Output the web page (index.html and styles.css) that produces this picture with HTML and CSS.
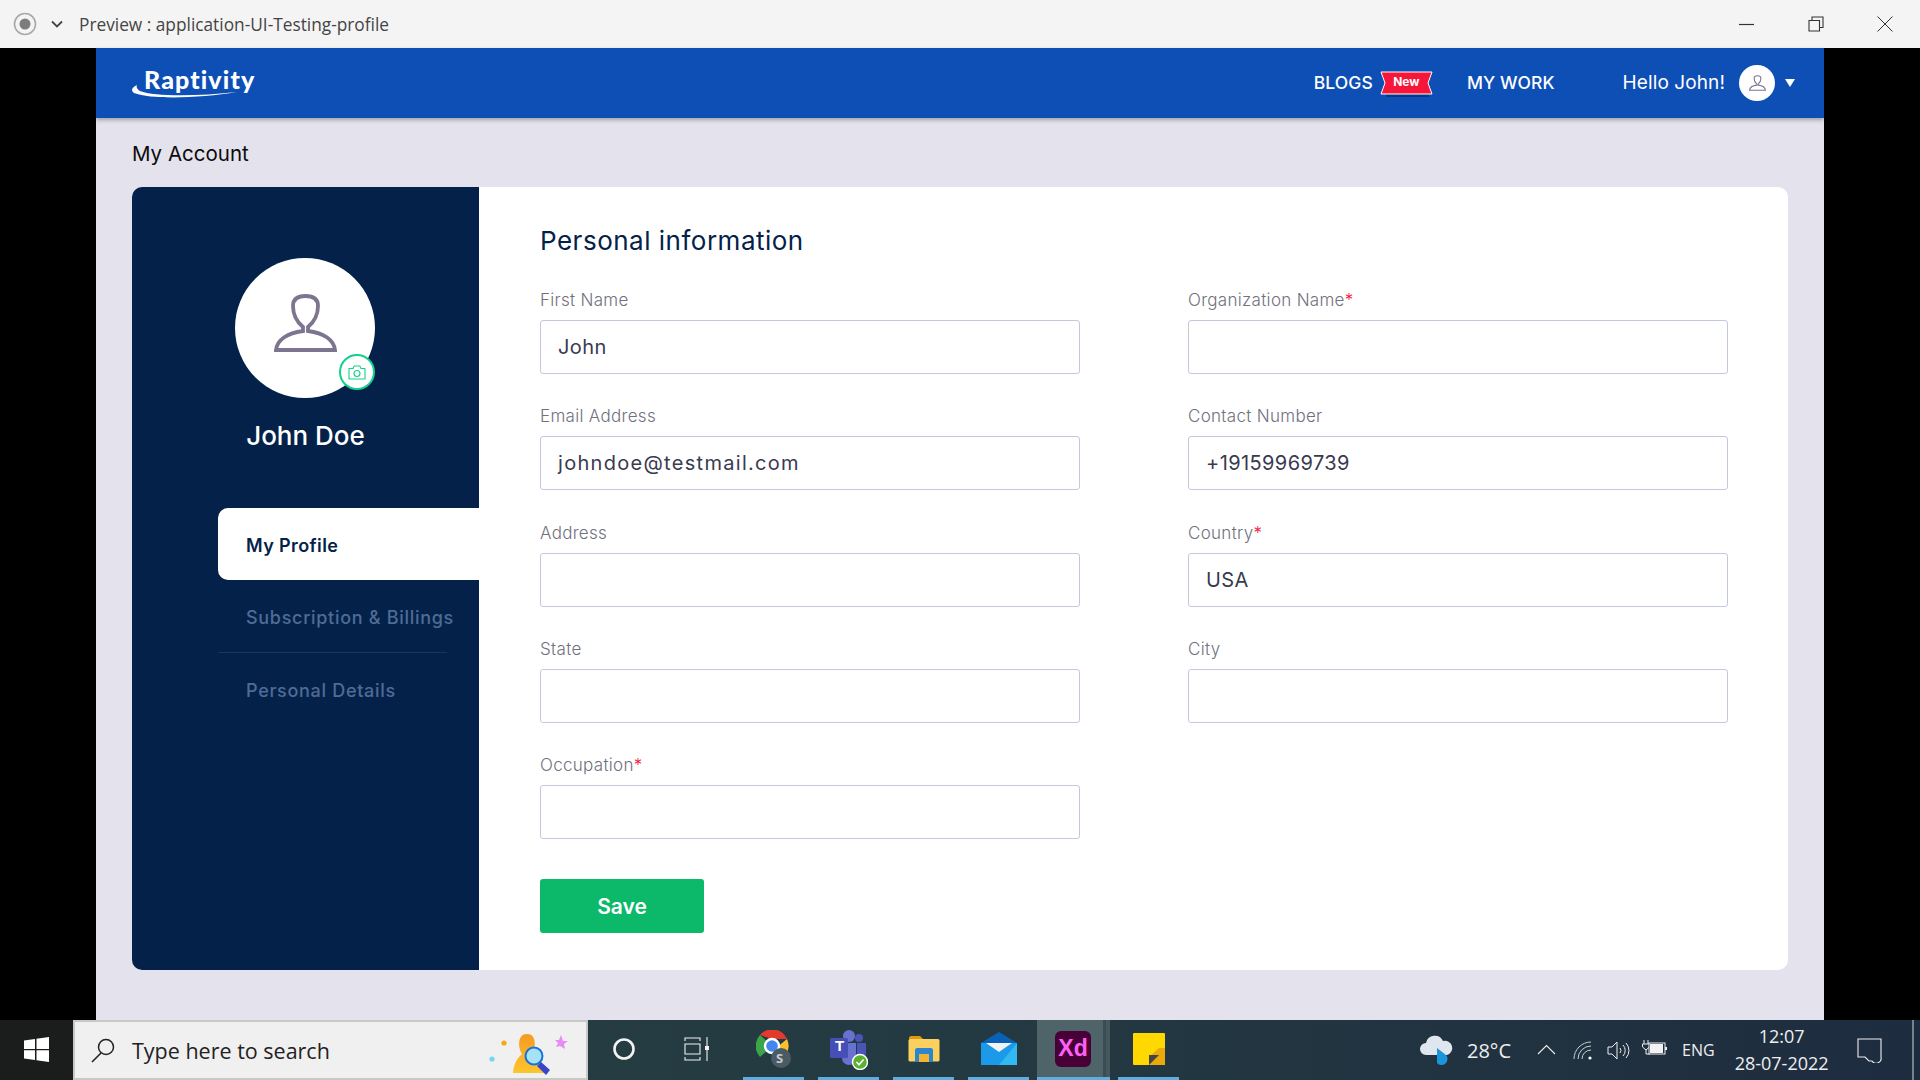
FILE: index.html
```html
<!DOCTYPE html>
<html lang="en">
<head>
  <meta charset="UTF-8" />
  <title>Preview : application-UI-Testing-profile</title>
  <link rel="stylesheet" href="styles.css">
</head>
<body>

  <div class="titlebar">
    <svg class="rec-icon" width="24" height="24" viewBox="0 0 24 24"><circle cx="12" cy="12" r="10.5" fill="none" stroke="#a9a9a9" stroke-width="1.6"/><circle cx="12" cy="12" r="5.5" fill="#7d7d7d"/></svg>
    <svg class="title-chevron" width="14" height="10" viewBox="0 0 14 10"><path d="M2 2.5 L7 7.5 L12 2.5" fill="none" stroke="#444" stroke-width="1.8"/></svg>
    <span class="title-text">Preview : application-UI-Testing-profile</span>
    <div class="window-btns">
      <svg width="16" height="16" viewBox="0 0 16 16"><path d="M0 8.5 H15" stroke="#333" stroke-width="1.2"/></svg>
      <svg width="16" height="16" viewBox="0 0 16 16"><path d="M1 4.5 H11.5 V15 H1 Z M4 4.5 V1 H15 V11.5 H11.5" fill="none" stroke="#333" stroke-width="1.1"/></svg>
      <svg width="16" height="16" viewBox="0 0 16 16"><path d="M0.5 0.5 L15.5 15.5 M15.5 0.5 L0.5 15.5" stroke="#333" stroke-width="1"/></svg>
    </div>
  </div>

  <div class="stage">
    <div class="app">
      <header class="header">
        <a class="logo">
          <svg class="logo-swoosh" width="112" height="14" viewBox="0 0 112 14"><path d="M6 0 C0 3 0 6 3 8 C22 15 70 13 106 7 C70 11 24 12 9 6 C6 4 5 2 6 0 Z" fill="#fff"/></svg>
          <span class="logo-text">Raptivity</span>
        </a>
        <nav class="nav">
          <a class="nav-link">BLOGS</a>
          <span class="ribbon">
            <svg width="53" height="26" viewBox="0 0 53 26"><path d="M6 23 H49 V26 H6 Z" fill="#0a2f74" opacity=".75"/><path d="M1 1 H52 L48 12 L52 23 H1 L5 12 Z" fill="#f5163a" stroke="#fff" stroke-width="1"/></svg>
            <span class="ribbon-text">New</span>
          </span>
          <a class="nav-link nav-work">MY WORK</a>
          <span class="hello">Hello John!</span>
          <span class="nav-avatar">
            <svg width="17" height="16" viewBox="0 0 63 58"><path d="M2 56 C3 46 13 39 29 37 V33 C23 28 19 22 19 12 C19 5 24 2 31.5 2 C39 2 44 5 44 12 C44 22 40 28 34 33 V37 C50 39 60 46 61 56 Z" fill="none" stroke="#7d7490" stroke-width="4"/></svg>
          </span>
          <span class="caret"></span>
        </nav>
      </header>

      <main class="page">
        <h1 class="page-title">My Account</h1>
        <div class="card">
          <aside class="side">
            <div class="avatar">
              <svg width="63" height="58" viewBox="0 0 63 58"><path d="M2 56 C3 46 13 39 29 37 V33 C23 28 19 22 19 12 C19 5 24 2 31.5 2 C39 2 44 5 44 12 C44 22 40 28 34 33 V37 C50 39 60 46 61 56 Z" fill="none" stroke="#7d7490" stroke-width="3.8"/></svg>
              <span class="avatar-cam">
                <svg width="18" height="15" viewBox="0 0 18 15"><path d="M1 3.5 H5 L6.2 1 H11.8 L13 3.5 H17 V14 H1 Z" fill="none" stroke="#14d18c" stroke-width="1.1" stroke-linejoin="round"/><circle cx="9" cy="8.5" r="3" fill="none" stroke="#14d18c" stroke-width="1.1"/></svg>
              </span>
            </div>
            <div class="side-name">John Doe</div>
            <ul class="side-menu">
              <li class="side-item active">My Profile</li>
              <li class="side-item divided">Subscription &amp; Billings</li>
              <li class="side-item">Personal Details</li>
            </ul>
          </aside>

          <section class="content">
            <h2 class="content-title">Personal information</h2>
            <div class="form-grid">
              <div class="field"><label>First Name</label><div class="input">John</div></div>
              <div class="field"><label>Organization Name<i>*</i></label><div class="input"></div></div>
              <div class="field"><label>Email Address</label><div class="input input-email">johndoe@testmail.com</div></div>
              <div class="field"><label>Contact Number</label><div class="input">+19159969739</div></div>
              <div class="field"><label>Address</label><div class="input"></div></div>
              <div class="field"><label>Country<i>*</i></label><div class="input">USA</div></div>
              <div class="field"><label>State</label><div class="input"></div></div>
              <div class="field"><label>City</label><div class="input"></div></div>
              <div class="field"><label>Occupation<i>*</i></label><div class="input"></div></div>
            </div>
            <button class="save">Save</button>
          </section>
        </div>
      </main>
    </div>
  </div>

  <div class="taskbar">
    <div class="start">
      <svg width="25" height="25" viewBox="0 0 25 25"><path d="M0 3.5 L11 2 V12 H0 Z M12.5 1.8 L25 0 V12 H12.5 Z M0 13.3 H11 V23 L0 21.5 Z M12.5 13.3 H25 V25 L12.5 23.2 Z" fill="#fff"/></svg>
    </div>
    <div class="search">
      <svg width="26" height="26" viewBox="0 0 26 26"><circle cx="16" cy="10" r="7.5" fill="none" stroke="#222" stroke-width="1.5"/><path d="M11 16 L2 25" stroke="#222" stroke-width="1.6"/></svg>
      <span class="search-text">Type here to search</span>
      <svg class="search-art" width="80" height="44" viewBox="0 0 80 44">
        <defs><linearGradient id="sg" x1="0" y1="0" x2="0" y2="1"><stop offset="0" stop-color="#f59a23"/><stop offset="1" stop-color="#fdc52e"/></linearGradient></defs>
        <circle cx="3" cy="27" r="2.6" fill="#6fd8ea"/><circle cx="15" cy="11" r="2.6" fill="#f8a70f"/>
        <path d="M70 8 L72 3 L74 9 L79 9 L75 12 L76 17 L71 14 L67 15 L69 11 L66 8 Z" fill="#e78cf2"/>
        <path d="M24 41 C25 29 30 25 33 22 C29 16 28 2 38 2 C48 2 47 16 43 24 C50 27 56 33 58 41 Z" fill="url(#sg)"/>
        <path d="M52 30 L61 38 L57 43 L48 34 Z" fill="#3845c9"/>
        <circle cx="45" cy="24" r="8.5" fill="#a6e2f4" stroke="#1573d9" stroke-width="2"/>
      </svg>
    </div>

    <div class="tb-tools">
      <svg width="24" height="24" viewBox="0 0 24 24"><circle cx="12" cy="12" r="9.5" fill="none" stroke="#f2f2f2" stroke-width="2.6"/></svg>
      <svg width="26" height="24" viewBox="0 0 26 24"><path d="M1 4 V1 H16 V4 M1 20 V23 H16 V20 M1 7 H16 V17 H1 Z M23 0 V24" fill="none" stroke="#f2f2f2" stroke-width="1.1"/><rect x="21" y="9" width="4" height="4" fill="#f2f2f2"/></svg>
    </div>

    <div class="tb-apps">
      <div class="tb-app">
        <svg width="36" height="38" viewBox="0 0 36 38">
          <path d="M16 16 L4 27 A16 16 0 0 1 4 5 Z" fill="#3ba54a"/>
          <path d="M4 5 A16 16 0 0 1 31 9 L16 9 Z" fill="#e23b2e"/>
          <path d="M31 9 A16 16 0 0 1 16 32 L20 18 Z" fill="#fbc02d"/>
          <circle cx="16" cy="16" r="7" fill="#4387ee" stroke="#fff" stroke-width="2.4"/>
          <circle cx="25" cy="28" r="10" fill="#4a5b64"/>
        </svg>
        <span class="chrome-s">S</span>
      </div>
      <div class="tb-app">
        <svg width="38" height="42" viewBox="0 0 38 42">
          <circle cx="19" cy="8" r="6" fill="#6a72cf"/><circle cx="29" cy="10" r="4" fill="#4b55b8"/>
          <path d="M12 15 H26 V30 A7 7 0 0 1 12 30 Z" fill="#6a72cf"/><path d="M27 15 H36 V26 A5 5 0 0 1 27 30 Z" fill="#4b55b8"/>
          <rect x="0" y="10" width="18" height="20" rx="1.5" fill="#464fb5"/>
          <circle cx="30" cy="34" r="7.5" fill="#5ab030" stroke="#fff" stroke-width="1.4"/>
          <path d="M26.5 34 L29 36.8 L33.5 31.6" fill="none" stroke="#fff" stroke-width="1.6"/>
        </svg>
        <span class="teams-t">T</span>
      </div>
      <div class="tb-app">
        <svg width="32" height="28" viewBox="0 0 32 28">
          <path d="M1 3 C1 2 2 1 3 1 H12 L15 4 H1 Z" fill="#e09a0f"/>
          <rect x="0.5" y="4" width="31" height="22.5" rx="1.5" fill="#fbd05e"/>
          <path d="M7 27 V15 C7 14 8 13 9 13 H23 C24 13 25 14 25 15 V27 H21 V19 H11 V27 Z" fill="#2b86cf"/>
          <rect x="11" y="19" width="10" height="8" fill="#f2b431"/>
        </svg>
      </div>
      <div class="tb-app">
        <svg width="36" height="33" viewBox="0 0 36 33">
          <path d="M0 11 L18 0 L36 11 V14 H0 Z" fill="#0a62b8"/>
          <path d="M0 11 H36 V33 H0 Z" fill="#1a9ae8"/>
          <path d="M36 11 V33 H18 Z" fill="#38c3f5" opacity=".75"/>
          <path d="M5 11 H31 L18 20 Z" fill="#f3f3f3"/>
        </svg>
      </div>
      <div class="tb-app tb-app-active">
        <div class="xd-icon">Xd</div>
      </div>
      <div class="tb-app">
        <svg width="32" height="32" viewBox="0 0 32 32">
          <rect width="32" height="32" rx="1" fill="#ffd800"/>
          <path d="M16 32 V24 L26 15 H32 V32 Z" fill="#e9ab0a"/>
          <path d="M16 32 V22 H26 Z" fill="#444"/>
        </svg>
      </div>
    </div>

    <div class="tray">
      <svg class="tray-cloud" width="36" height="32" viewBox="0 0 36 32">
        <path d="M7 21 A6 6 0 0 1 7 9 A9 9 0 0 1 24 7 A7 7 0 0 1 28 21 Z" fill="#dfe6ee"/>
        <path d="M18 14 L27 21 A6 6 0 0 1 18 29 Z" fill="#1a95dc"/>
      </svg>
      <span class="tray-temp">28°C</span>
      <svg class="tray-up" width="19" height="11" viewBox="0 0 19 11"><path d="M1 10 L9.5 1.5 L18 10" fill="none" stroke="#eee" stroke-width="1.1"/></svg>
      <svg class="tray-wifi" width="20" height="19" viewBox="0 0 20 19"><path d="M1 18 A17 17 0 0 1 18 1 M5 18 A13 13 0 0 1 18 5 M9 18 A9 9 0 0 1 18 9" fill="none" stroke="#c9d0d6" stroke-width="1"/><circle cx="17" cy="17" r="1.6" fill="#fff"/></svg>
      <svg class="tray-vol" width="23" height="19" viewBox="0 0 23 19"><path d="M1 6 H5 L10 1 V18 L5 13 H1 Z M13 7 A4 4 0 0 1 13 12 M16 4 A8 8 0 0 1 16 15 M19 2 A11 11 0 0 1 19 17" fill="none" stroke="#eee" stroke-width="1"/></svg>
      <svg class="tray-batt" width="25" height="16" viewBox="0 0 25 16"><path d="M2 0 V4 M6 0 V4 M0.5 4 H7.5 V7 L4 10 L0.5 7 Z M4 10 V14 H8" fill="none" stroke="#eee" stroke-width="1"/><rect x="7" y="3" width="16" height="11" fill="#1e2c3f" stroke="#eee"/><rect x="8" y="4" width="13" height="9" fill="#f2f2f2"/><rect x="23" y="7" width="2" height="3" fill="#eee"/></svg>
      <span class="tray-lang">ENG</span>
      <div class="tray-clock"><span>12:07</span><span>28-07-2022</span></div>
      <svg class="tray-note" width="25" height="25" viewBox="0 0 25 25"><path d="M1 1 H24 V19 A5 5 0 0 1 15 23 L12 23 L8 19 H1 Z" fill="none" stroke="#eee" stroke-width="1.1"/></svg>
      <span class="tray-edge"></span>
    </div>
  </div>

</body>
</html>
```

FILE: styles.css
```css
* {
  box-sizing: border-box;
}

html, body {
  margin: 0;
  padding: 0;
  height: 100%;
  overflow: hidden;
  font-family: "Inter", sans-serif;
}

body {
  display: flex;
  flex-direction: column;
  background: #000;
}

/* window title bar */
.titlebar {
  flex: 0 0 48px;
  display: flex;
  align-items: center;
  background: #f4f4f4;
  padding-left: 13px;
}

.title-chevron {
  margin-left: 13px;
}

.title-text {
  margin-left: 15px;
  font-family: "Open Sans", sans-serif;
  font-size: 17.3px;
  color: #444;
}

.window-btns {
  margin-left: auto;
  display: flex;
  gap: 53px;
  padding-right: 27px;
}

/* app frame */
.stage {
  flex: 1;
  min-height: 0;
  display: flex;
  justify-content: center;
  background: #000;
}

.app {
  width: 1728px;
  display: flex;
  flex-direction: column;
  background: #e4e2ec;
}

.header {
  flex: 0 0 70px;
  display: flex;
  align-items: center;
  justify-content: space-between;
  padding: 0 29px 0 35px;
  background: #0e4fb5;
  box-shadow: 0 2px 4px rgba(0, 0, 0, 0.3);
  position: relative;
}

.logo {
  position: relative;
  display: block;
  width: 125px;
  height: 36px;
  margin-bottom: 4px;
  color: #fff;
}

.logo-text {
  position: absolute;
  left: 13px;
  top: 1px;
  font-family: "Lato", sans-serif;
  font-weight: 900;
  font-size: 25px;
  letter-spacing: 1.1px;
  line-height: 30px;
}

.logo-swoosh {
  position: absolute;
  left: 0;
  bottom: 0;
}

.nav {
  display: flex;
  align-items: center;
  color: #fff;
}

.nav-link {
  margin-top: -2px;
  font-size: 17.5px;
  font-weight: 500;
  letter-spacing: 0.1px;
}

.ribbon {
  position: relative;
  display: block;
  width: 53px;
  height: 26px;
  margin-left: 7px;
  margin-top: 1px;
}

.ribbon-text {
  position: absolute;
  left: 0;
  top: 0;
  width: 100%;
  line-height: 22px;
  text-align: center;
  font-size: 12px;
  font-weight: 700;
}

.nav-work {
  margin-left: 34px;
}

.hello {
  margin-left: 68px;
  margin-top: -2px;
  font-size: 19px;
  letter-spacing: 0.1px;
}

.nav-avatar {
  width: 36px;
  height: 36px;
  margin-left: 14px;
  border-radius: 50%;
  background: #fff;
  display: flex;
  align-items: center;
  justify-content: center;
}

.caret {
  margin-left: 10px;
  border-left: 5px solid transparent;
  border-right: 5px solid transparent;
  border-top: 8px solid #fff;
}

.page {
  flex: 1;
  padding: 0 36px 50px;
  display: flex;
  flex-direction: column;
}

.page-title {
  margin: 0;
  flex: 0 0 69px;
  padding-top: 22px;
  font-size: 20.5px;
  line-height: 28px;
  font-weight: 400;
  color: #0b0b0b;
}

.card {
  flex: 1;
  display: flex;
  background: #fff;
  border-radius: 10px;
  overflow: hidden;
}

/* left panel */
.side {
  flex: 0 0 347px;
  background: #042249;
  padding-top: 71px;
  display: flex;
  flex-direction: column;
  align-items: center;
}

.avatar {
  position: relative;
  width: 140px;
  height: 140px;
  margin-right: 1px;
  border-radius: 50%;
  background: #fff;
  display: flex;
  align-items: center;
  justify-content: center;
  padding-bottom: 10px;
}

.avatar-cam {
  position: absolute;
  right: 0;
  bottom: 8px;
  width: 36px;
  height: 36px;
  border-radius: 50%;
  border: 2px solid #14d18c;
  background: #fff;
  display: flex;
  align-items: center;
  justify-content: center;
}

.side-name {
  margin-top: 20px;
  font-size: 26px;
  line-height: 36px;
  font-weight: 500;
  color: #fff;
}

.side-menu {
  list-style: none;
  margin: 54px 0 0;
  padding: 0 0 0 86px;
  width: 100%;
}

.side-item {
  height: 72px;
  padding-left: 28px;
  padding-top: 2px;
  display: flex;
  align-items: center;
  font-size: 18px;
  font-weight: 500;
  letter-spacing: 0.7px;
  color: #4f6b97;
}

.side-item.active {
  background: #fff;
  color: #042249;
  font-weight: 600;
  letter-spacing: 0.4px;
  border-radius: 10px 0 0 10px;
}

.side-item.divided {
  width: 229px;
  height: 73px;
  white-space: nowrap;
  border-bottom: 1px solid #173660;
}

/* form */
.content {
  flex: 1;
  padding: 36px 60px 0 61px;
}

.content-title {
  margin: 0 0 28px;
  font-size: 26px;
  line-height: 36px;
  font-weight: 400;
  letter-spacing: 0.5px;
  color: #042249;
}

.form-grid {
  display: grid;
  grid-template-columns: 540px 540px;
  column-gap: 108px;
  row-gap: 29.25px;
}

.field label {
  display: block;
  font-size: 17px;
  line-height: 24px;
  padding-top: 1px;
  margin-bottom: 8px;
  letter-spacing: 0.3px;
  color: #71717e;
  font-weight: 300;
}

.field label i {
  color: #f5163a;
  font-style: normal;
}

.input {
  height: 54px;
  padding: 0 17px;
  display: flex;
  align-items: center;
  border: 1px solid #c3c8e0;
  border-radius: 3px;
  font-size: 20px;
  letter-spacing: 0.4px;
  color: #3a3a50;
}

.input-email {
  letter-spacing: 1.3px;
}

.save {
  display: block;
  margin-top: 40px;
  padding-top: 2px;
  width: 164px;
  height: 54px;
  border: none;
  border-radius: 3px;
  background: #0cb86a;
  color: #fff;
  font-family: inherit;
  font-size: 21px;
  font-weight: 600;
}

/* windows taskbar */
.taskbar {
  flex: 0 0 60px;
  display: flex;
  background: linear-gradient(90deg, #263e43 0%, #243a42 50%, #1e2c3f 100%);
  color: #eee;
  font-family: "Open Sans", sans-serif;
}

.start {
  flex: 0 0 73px;
  background: #1b1c1c;
  display: flex;
  align-items: center;
  justify-content: center;
  padding-bottom: 2px;
}

.search {
  flex: 0 0 515px;
  display: flex;
  align-items: center;
  position: relative;
  padding-left: 15px;
  background: #f0f0f0;
  border: 2px solid #c8c8c8;
  color: #222;
}

.search-text {
  margin-left: 16px;
  font-size: 21.5px;
}

.search-art {
  position: absolute;
  right: 17px;
  bottom: 2px;
}

.tb-tools {
  flex: 0 0 155px;
  display: flex;
  align-items: center;
  padding-left: 24px;
  gap: 48px;
  padding-bottom: 2px;
}

.tb-apps {
  display: flex;
  gap: 14px;
}

.tb-app {
  position: relative;
  width: 61px;
  height: 60px;
  display: flex;
  align-items: center;
  justify-content: center;
  border-bottom: 3px solid #62ade0;
}

.tb-app-active {
  width: 73px;
  margin: 0 -6px;
  padding-right: 1px;
  background: linear-gradient(90deg, #4f6468 0 66px, #3a4d52 66px 69px, #45595d 69px);
}

.xd-icon {
  width: 36px;
  height: 36px;
  border-radius: 6px;
  background: #470137;
  color: #ff61f6;
  display: flex;
  align-items: center;
  justify-content: center;
  font-family: "Liberation Sans", sans-serif;
  font-size: 23px;
  font-weight: 700;
}

.chrome-s {
  position: absolute;
  left: 33px;
  top: 29px;
  font-size: 13px;
  font-weight: 700;
  color: #c4ccd0;
}

.teams-t {
  position: absolute;
  left: 17px;
  top: 17px;
  font-family: "Liberation Sans", sans-serif;
  font-size: 15px;
  font-weight: 700;
  color: #fff;
}

.tray {
  flex: 1;
  position: relative;
  display: flex;
  align-items: center;
  padding-left: 240px;
}

.tray-temp {
  margin-left: 12px;
  font-size: 20px;
}

.tray-up {
  margin-left: 26px;
  margin-bottom: 2px;
}

.tray-wifi {
  margin-left: 17px;
}

.tray-vol {
  margin-left: 14px;
}

.tray-batt {
  margin-left: 12px;
  margin-bottom: 4px;
}

.tray-lang {
  margin-left: 15px;
  font-size: 16px;
}

.tray-clock {
  margin-left: 19px;
  width: 96px;
  display: flex;
  flex-direction: column;
  align-items: center;
  font-size: 18px;
  line-height: 27px;
  margin-top: -1px;
  white-space: nowrap;
}

.tray-note {
  margin-left: 27px;
}

.tray-edge {
  position: absolute;
  right: 6px;
  top: 0;
  bottom: 0;
  width: 2px;
  background: #76828c;
}
```
